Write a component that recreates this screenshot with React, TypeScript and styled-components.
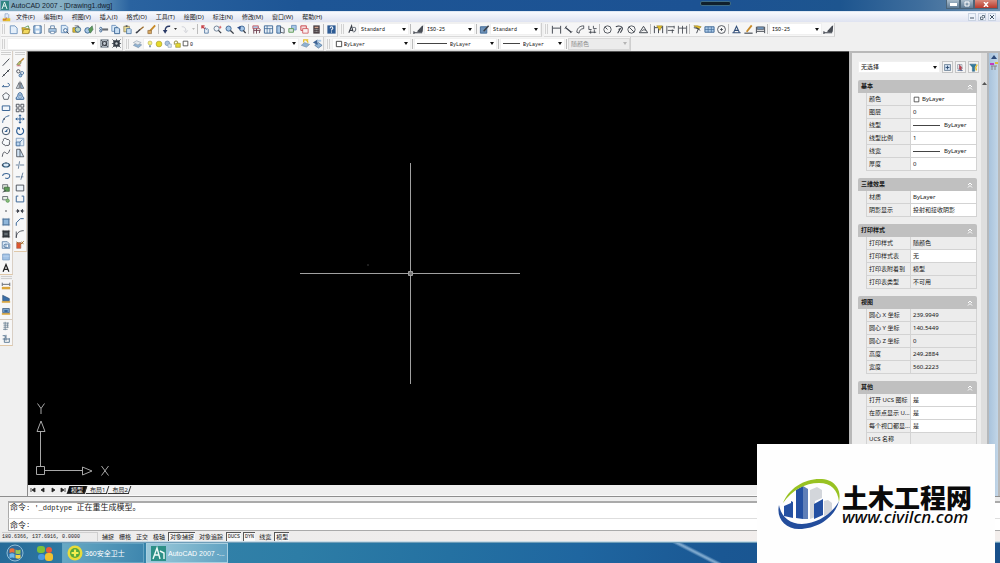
import React from "react";
import styled, { createGlobalStyle, css } from "styled-components";

const sans = `"Noto Sans", "Noto Sans CJK SC", sans-serif`;
const mono = `"Liberation Mono", "Noto Sans CJK SC", monospace`;

const GlobalStyle = createGlobalStyle`
  * { box-sizing: border-box; }
  body { margin: 0; background: #f0f0f0; font-family: ${sans}; font-size: 6px; color: #161616; }
  button, select, input, textarea { font: inherit; color: inherit; margin: 0; padding: 0; border: 0; background: none; border-radius: 0; }
  a { color: inherit; text-decoration: none; }
`;

/* ---------- glyphs ---------- */

const K = "#3a3f48";
const B = "#3d6796";
const L = "#a9c8e6";
const Y = "#e6c02a";
const R = "#c8434a";
const G = "#5d9a58";

const glyphs: Record<string, React.ReactNode> = {
  new: <path d="M2.500 2h5l2.500 2.500v6h-7.500z" fill="#e4effa" stroke="#6e93bd" />,
  open: <><path d="M2 4h3l1 1h4v5H3z" fill={Y} stroke="#8a7426" strokeWidth=".7" /><path d="M5 4l4-2 1 3" fill="none" stroke={G} /><path d="M4 6h7l-2 4.500H2.500z" fill="#f2d960" stroke="#8a7426" strokeWidth=".7" /></>,
  save: <><path d="M2 2h8v8H2z" fill={L} stroke={B} /><path d="M4 2h4v3H4zM4 7h4v3H4z" fill="#f4f8fc" /></>,
  print: <><path d="M4 5V2h4v3" fill="#fff" stroke={B} strokeWidth=".8" /><path d="M2 5h8v4H2z" fill={L} stroke="#5a6f87" strokeWidth=".8" /><path d="M4 8h4v2.500H4z" fill="#fff" stroke={B} strokeWidth=".6" /></>,
  preview: <><path d="M2.500 1.500h5l2 2v6h-7z" fill="#dcebf8" stroke="#6e93bd" /><circle cx="7" cy="7" r="2" fill="#f6fafd" stroke={B} /><path d="M8.500 8.500l2 2" stroke={K} /></>,
  publish: <><path d="M2 4h6v5H2z" fill={Y} stroke="#7a7030" strokeWidth=".7" /><circle cx="7.500" cy="6" r="3" fill="#b8d4c0" stroke={B} /><path d="M4 2h4v2" stroke={K} strokeWidth=".7" fill="none" /></>,
  web: <><circle cx="5" cy="7" r="3" fill={L} stroke={B} /><path d="M6 6l4-4 1 4-3 4z" fill={G} stroke="#416a55" strokeWidth=".6" /></>,
  cut: <><path d="M4.500 5.500h6.500M4.500 6.500h6.500" stroke={K} /><circle cx="3" cy="4.800" r="1.200" fill="none" stroke={B} /><circle cx="3" cy="7.500" r="1.200" fill="none" stroke={B} /></>,
  copyclip: <><path d="M2 1.500h4l1.500 1.500v5H2z" fill="#dcebf8" stroke="#6e93bd" /><path d="M5 4h4l1.500 1.500v5H5z" fill="#c8def2" stroke={B} /></>,
  paste: <><path d="M2 2.500h6v6H2z" fill="#e9dc9a" stroke="#8a7e50" strokeWidth=".8" /><path d="M4 1.500h2v1.500H4z" fill={K} /><path d="M5 5h4l1 1v4.500H5z" fill="#c8def2" stroke={B} strokeWidth=".8" /></>,
  match: <><path d="M10.500 3L6 6.500" stroke="#9a6a2c" strokeWidth="1.400" /><path d="M6.500 6L3 9.500 2 9" stroke={K} strokeWidth="1.600" fill="none" /></>,
  blockedit: <><path d="M10 1.500L5 7l-2 3" stroke="#c88a28" strokeWidth="2" fill="none" /><path d="M2 7h4v3.500H2z" fill="#d8a860" stroke="#7c5a30" strokeWidth=".6" /></>,
  undo: <><path d="M10 2.500C6 2 4.500 4 4.500 8" stroke="#2a3a66" strokeWidth="1.500" /><path d="M2 6.500h5L4.500 10.500z" fill="#2a3a66" /></>,
  redo: <path d="M3 3c3 0 4.500 1 4.500 5M5.500 7l2 2.500 2-2.500" stroke="#c9ccd2" fill="none" />,
  pan: <><path d="M2 2l4 4M2 5V2h3" stroke={R} strokeWidth="1.200" fill="none" /><path d="M5 10V6l1-2 1 2 1-1 1 1v4z" fill="#e8eef6" stroke={B} strokeWidth=".8" /></>,
  zoomrt: <><circle cx="5" cy="5" r="2.800" fill="#eef4fa" stroke="#6a7c92" /><path d="M7 7l3 3" stroke={K} strokeWidth="1.400" /><path d="M9 2v3M7.700 3.500h2.600" stroke={R} strokeWidth=".8" /></>,
  zoomwin: <><circle cx="5" cy="5" r="2.800" fill={L} stroke={B} /><path d="M7 7l3.500 3.500" stroke={K} strokeWidth="1.500" /></>,
  zoomprev: <><circle cx="6.500" cy="5" r="2.800" fill={L} stroke={B} /><path d="M8 7l2.500 3" stroke={K} strokeWidth="1.500" /><path d="M1 4l4-2v4z" fill="#2a4a86" /></>,
  properties: <><path d="M2 2h6v3H2z" fill={L} stroke={R} strokeWidth=".8" /><path d="M3 5v5.500M6 5v5.500M3 7h7M8 4l2 2-1 4" stroke="#6e3f4f" fill="none" /></>,
  designcenter: <><path d="M1.500 2h9v8h-9z" fill="#e8f0f8" stroke={B} /><path d="M1.500 5h9M4.500 2v8M7.500 5v5" stroke={B} strokeWidth=".8" /></>,
  palettes: <><path d="M2 2h4v8H2z" fill={L} stroke={B} /><path d="M6 3l4 2v5l-4-1z" fill="#e8f0f8" stroke={K} strokeWidth=".8" /></>,
  sheetset: <><path d="M5 1.500h5v5H5z" fill={L} stroke="#6e93bd" /><path d="M2 5h5v4H2z" fill="#d8e4da" stroke={G} /></>,
  markup: <><path d="M2 2h6v5H2z" fill="#f5dcdc" stroke={R} /><path d="M4 5h6v5H4z" fill="#f9f0f0" stroke={R} strokeWidth=".8" /></>,
  calc: <><path d="M2.500 1.500h7v9h-7z" fill="#4b4044" /><path d="M4 3h4v1.500H4z" fill="#d0a08a" /><path d="M4 6h4M4 8h4" stroke="#aaa" strokeDasharray="1 .5" /></>,
  help: <><path d="M1.500 1.500h9v9h-9z" fill="#2d5b94" /><path d="M4.500 4.500c0-2 3-2 3 0 0 1.200-1.500 1-1.500 2.500M6 8.200v1.200" stroke="#fff" fill="none" strokeWidth="1.100" /></>,
  textstyle: <><path d="M2 9.500L5 2l1.500 6M3 7h3" stroke={K} strokeWidth="1.200" fill="none" /><path d="M6 4c4-2 5 3 1 5" stroke="#6a7078" strokeWidth="1.100" /></>,
  dimstyle: <><path d="M1 9.500h9M1 8v3" stroke={K} strokeWidth="1.200" /><path d="M10.500 2L5 8l5 .5z" fill="#4b4f55" stroke={K} /></>,
  tablestyle: <><path d="M1.500 3h7v7h-7z" fill="#6f93b8" stroke={B} /><path d="M10.500 2L5 8" stroke={K} strokeWidth="1.600" /></>,
  dlinear: <path d="M1.500 2v8.500M10.500 2v8.500M2 4.500h8" stroke={K} fill="none" />,
  daligned: <><path d="M3 4l6 5" stroke={K} strokeWidth="1.400" /><path d="M2 5l2-3M8 10l2-2" stroke={K} /></>,
  darc: <path d="M2 9C2 5 5 2 9.500 2M4.500 10c0-3 2-5 5-5M2 9l2.500 1M9.500 2v3" stroke={K} fill="none" strokeWidth=".9" />,
  dord: <path d="M2 2v4h3M7 2v3h3.500M2 9h8M4 7v3.500M8 6v4" stroke={K} fill="none" strokeWidth=".9" />,
  dradius: <><circle cx="6" cy="6" r="4" fill="none" stroke={K} strokeWidth=".9" /><path d="M6 6L3.500 3.500" stroke={K} /></>,
  djog: <path d="M2 3c4-2 8 0 7 3L7 9.500M4 10l3-5-2 1" stroke={K} fill="none" strokeWidth="1.100" />,
  ddia: <><circle cx="6" cy="6" r="4" fill="none" stroke={K} strokeWidth=".9" /><path d="M3.500 3.500l5 5" stroke={K} /></>,
  dang: <path d="M1.500 9.500h9L6 2.500zM4 8c1-2 3-2 4.500-1" stroke={K} fill="none" />,
  dquick: <><path d="M1.500 2v8M10.500 2v8M6 5v5M2 4h8" stroke={K} fill="none" /><path d="M4 2h6L7.500 7z" fill={Y} stroke="#86701c" strokeWidth=".5" /></>,
  dbase: <path d="M2 2v8.500M10 3H3M10 7H3M10 2v3M8 6v4" stroke={K} fill="none" strokeWidth=".9" />,
  dcont: <path d="M1.500 2v8.500M6 2v8.500M10.500 2v8.500M2 4.500h8" stroke={K} fill="none" strokeWidth=".9" />,
  leader: <><path d="M2 2h4l4 1-3 3z" fill={Y} stroke="#86701c" strokeWidth=".6" /><path d="M2 4l5 1-2 5M5 4l4 3" stroke={K} fill="none" /></>,
  tol: <><path d="M1 3h10v6H1z" fill={L} stroke={B} /><path d="M4.500 3v6M8 3v6M1 6h10" stroke={B} strokeWidth=".7" /></>,
  center: <><circle cx="6" cy="6" r="4.300" fill="none" stroke={K} strokeWidth=".9" /><path d="M4.500 6h3M6 4.500v3" stroke={K} /></>,
  dedit: <path d="M1.500 9.500h9M3 9L6 2.500 9 9M4 7h4" stroke="#34507a" fill="none" strokeWidth="1.200" />,
  dtedit: <><path d="M1.500 10h9" stroke={K} strokeWidth="1.200" /><path d="M9.500 1.500L4 8.500" stroke="#c88a28" strokeWidth="2" /></>,
  dupd: <><path d="M1.500 3v7M10.500 3v7M2 8h8" stroke={K} fill="none" /><path d="M2.500 3h7v3h-7z" fill="#6f93b8" stroke={K} strokeWidth=".6" /></>,
  gear: <><path d="M2 2h8v8H2z" fill="#c4ccd4" stroke="#707b87" /><circle cx="6" cy="6" r="2.200" fill="none" stroke={K} strokeWidth="1.300" /><path d="M2 2l2.500 2.500M10 2L7.500 4.500M2 10l2.500-2.500M10 10L7.500 7.500" stroke={K} strokeWidth=".8" /></>,
  geardark: <><path d="M2.500 2.500h7v7h-7z" fill="#333b44" /><path d="M1.500 1.500l9 9M10.500 1.500l-9 9M6 1v10M1 6h10" stroke="#333b44" strokeWidth=".8" /><circle cx="6" cy="6" r="1.300" fill="#c8ccd0" /></>,
  layers: <><path d="M1.500 8L5 5.500l5.500 2L7 10.500z" fill="#8fb2d2" stroke="#7590ab" strokeWidth=".7" /><path d="M1.500 5L5 3l5 2-3.500 2.500z" fill="#e4e9ee" stroke="#98a4b0" strokeWidth=".7" /></>,
  bulb: <><circle cx="6" cy="4.500" r="3" fill="#f6ef7c" stroke="#aaa13a" strokeWidth=".8" /><path d="M4.500 8h3v3h-3z" fill="#8fa0b0" /></>,
  sun: <circle cx="6" cy="6" r="4.300" fill="#e6da2a" stroke="#a79b2c" />,
  freeze: <><circle cx="5" cy="5" r="3.500" fill="#a9c2de" stroke="#6c89aa" /><path d="M6 6h5v5H6z" fill="#dde7f0" stroke="#7c97b6" strokeWidth=".8" /></>,
  lock: <><path d="M4 5h7v6H4z" fill="#e3d733" stroke="#8b8222" strokeWidth=".8" /><path d="M2 7V3c0-2 5-2 5 0v2" stroke="#8b8222" fill="none" strokeWidth="1.300" /></>,
  swatch: <path d="M2 2h8v8H2z" fill="#fff" stroke="#333" strokeWidth="1.300" />,
  layerprev: <><path d="M1.500 8L5 5l5.500 2L7 10z" fill="#8fb2d2" stroke="#7590ab" strokeWidth=".7" /><path d="M4 5V2h5M7 2l2 3" stroke={Y} strokeWidth="1.300" fill="none" /></>,
  layerstate: <><path d="M3 8l4-3 4 3-4 3z" fill="#8fb2d2" stroke={B} strokeWidth=".7" /><path d="M1 5l5-3.500v6z" fill="#3e6494" /><path d="M6 3h4" stroke={L} strokeWidth="2" /></>,
  line: <path d="M2 10.500L10 2" stroke={K} strokeWidth="1.100" />,
  xline: <><path d="M1.500 10.500L10.500 1.500" stroke={K} strokeWidth="1.200" /><circle cx="3.500" cy="8.500" r="1" fill={K} /><circle cx="8.500" cy="3.500" r="1" fill={K} /></>,
  pline: <path d="M1.500 8h6c3.500 0 3.500-4 .5-4M1.500 8l2-2" stroke={B} strokeWidth="1.200" fill="none" />,
  polygon: <path d="M6 2l4 3-1.500 5h-5L2 5z" stroke={K} fill="#f5f8fb" strokeWidth=".9" />,
  rect: <path d="M1.500 3.500h9v5.500h-9z" stroke={B} fill="#f1f6fb" strokeWidth="1.200" />,
  arc: <><path d="M2 10.500C2 6 5 3 10 2" stroke={B} strokeWidth="1.200" fill="none" /><circle cx="4" cy="6" r=".9" fill={K} /></>,
  circle: <><circle cx="6" cy="6" r="4.500" stroke="#44566c" strokeWidth="1.200" fill="none" /><path d="M6 6l2-2M4.500 6.500h3" stroke={B} strokeWidth="1.300" /></>,
  cloud: <path d="M3 4c-1-3 4-3 4-1 3-1 4 2 3 4 1 2-1 4-3 3-2 1-3 0-3-1-3 0-3-3-1-5z" stroke={K} fill="#f8fafc" />,
  spline: <path d="M1.500 10.500c1-7 3-6 4.500-4.500S9 7 10.500 2" stroke={K} fill="none" />,
  ellipse: <><ellipse cx="6" cy="6" rx="4" ry="2.400" stroke="#2f5a7c" strokeWidth="1.400" fill="#d9e8f5" /><path d="M1 6h1.500M9.500 6H11M6 3v1" stroke={K} strokeWidth="1.500" /></>,
  earc: <path d="M2 6c0-4 9-4 8.500 0-.5 3-3 3.500-5.500 2.500" stroke={B} strokeWidth="1.300" fill="none" />,
  insert: <><path d="M2 2h6v5H2z" fill="#dfe9df" stroke={K} strokeWidth=".8" /><path d="M4 5h6v5H4z" fill={G} stroke="#3c6138" strokeWidth=".8" /><path d="M6 9l-4 2" stroke={K} /></>,
  block: <><path d="M2 3h6v4H2z" fill="#e3efe3" stroke={K} strokeWidth=".8" /><circle cx="8" cy="8" r="2" fill="#8bbf7c" stroke={G} /></>,
  point: <circle cx="6" cy="6" r="1" fill={K} />,
  hatch: <><path d="M2.500 2.500h7v7h-7z" fill="#8fb6da" stroke={B} /><path d="M1 2.500h10M1 9.500h10M2.500 1v10M9.500 1v10" stroke="#55769a" strokeWidth=".6" /></>,
  gradient: <><path d="M2.500 2.500h7v7h-7z" fill="#3e444b" stroke="#22262b" /><path d="M1 2.500h10M1 9.500h10M2.500 1v10M9.500 1v10" stroke="#22262b" strokeWidth=".6" /><path d="M4 6h4" stroke="#9aa" /></>,
  region: <><path d="M1.500 2h6l3 3v5h-9z" fill="#dbe9f6" stroke={B} strokeWidth=".8" /><circle cx="5.500" cy="7" r="2" fill="none" stroke={B} /><path d="M6 5h3v4H6z" fill="#f4f8fc" stroke={B} strokeWidth=".7" /></>,
  table: <><path d="M2 2.500h8v7H2z" fill="#a2c3e6" stroke="#7a9cc4" /><path d="M2 5h8" stroke="#d0e2f4" strokeWidth=".6" /></>,
  mtext: <path d="M2.500 10.500L6 1.800l3.500 8.700M3.800 7.500h4.400" stroke="#222" strokeWidth="1.500" fill="none" />,
  erase: <><path d="M10.500 1.500L5.500 6.500" stroke="#b98a3a" strokeWidth="1.800" /><path d="M2 9l3.500-4 2 2L5 10z" fill="#b7bf6a" stroke="#5f5840" strokeWidth=".6" /><path d="M2 10.500h5" stroke={R} strokeWidth=".8" /></>,
  copy: <><circle cx="4" cy="4" r="2" fill="none" stroke={K} /><circle cx="8.500" cy="6" r="1.800" fill="none" stroke={B} /><circle cx="6.500" cy="9" r="1.700" fill={L} stroke={B} /></>,
  mirror: <><path d="M5 3v7H1.500z" fill="#e6edf4" stroke={K} strokeWidth=".8" /><path d="M7 3v7h3.500z" fill={L} stroke={K} strokeWidth=".8" /><path d="M6 1v10" stroke={K} strokeWidth=".6" /></>,
  offset: <><path d="M1.500 10c-1-3 2-3 2-5 0-4 5-4 5 0 0 2 3 2 2 5z" fill="#b5d0ec" stroke={B} strokeWidth="1.200" /><path d="M4.500 8.500c0-2 1-2 1-4h1c0 2 1 2 1 4z" fill="#eef5fb" stroke={B} strokeWidth=".7" /></>,
  array: <path d="M1.500 1.500H5V5H1.500zM7 1.500h3.500V5H7zM1.500 7H5v3.500H1.500zM7 7h3.500v3.500H7z" fill="#f4f6f8" stroke={K} />,
  move: <path d="M6 1v10M1 6h10M4.500 2.500L6 1l1.500 1.500M4.500 9.500L6 11l1.500-1.500M2.500 4.500L1 6l1.500 1.500M9.500 4.500L11 6 9.500 7.500" stroke="#2e5f95" strokeWidth="1.200" fill="none" />,
  rotate: <><path d="M4 2.500A4.200 4.200 0 1 0 8.500 2.600" stroke="#2e5f95" strokeWidth="1.400" fill="none" /><path d="M2 1.500h4v3.500z" fill="#2e5f95" /></>,
  scale: <><path d="M1.500 1.500h9v9h-9z" fill="#e6f0f9" stroke="#6b8db3" strokeWidth=".9" /><path d="M1.500 6h4.500v4.500H1.500zM6 6l3-3" fill="#bcd5ed" stroke={B} strokeWidth=".9" /></>,
  stretch: <path d="M2 1.500h4l4.500 9H2zM6 1.500v9" fill="#d0e2f3" stroke={K} strokeWidth=".9" />,
  trim: <path d="M1 6h3M6 6h5M5.500 1.500L4 10.500" stroke="#54708f" />,
  extend: <path d="M1 7h5M9.500 2L7 10.500M7 7h3" stroke="#54708f" />,
  breakpt: <path d="M1.500 2.500h9v7h-9z" fill="#eef4fa" stroke={K} />,
  break: <path d="M4 2.500H1.500v7h9v-7H8" fill="none" stroke={B} strokeWidth="1.200" />,
  join: <path d="M1 6h4M7 6h4M3 4l2 2-2 2zM9 4L7 6l2 2z" stroke={K} fill={K} />,
  chamfer: <path d="M1.500 10.500V7l5-5h4" stroke={B} fill="none" strokeWidth="1.200" />,
  fillet: <path d="M1.500 10.500c0-5 3-8.500 9-8.500M1.500 10.500V3" stroke={K} fill="none" />,
  explode: <><path d="M2 3h5v7H2z" fill="#e0552f" stroke="#8a5a4a" strokeWidth=".6" /><path d="M6 6l4.500-4.500M8 2l2 3M5 5l-3-3" stroke="#a8742e" strokeWidth="1.200" /></>,
  dist: <><path d="M1 7h10v3H1z" fill="#dba63a" /><path d="M1.500 2v4M10.500 2v4M2 4h8" stroke={K} strokeWidth=".9" /></>,
  area: <><path d="M1 8.500h10v2H1z" fill="#dba63a" /><path d="M2 1.500l8 4V8H2z" fill="#3a6fa8" stroke="#2d4a6c" strokeWidth=".7" /></>,
  mass: <><path d="M1 8.500h10v2H1z" fill="#dba63a" /><path d="M2 3h8v5H2z" fill="#7ba6d0" stroke="#2d4a6c" strokeWidth=".8" /><path d="M4 5h4v2H4z" fill="#2d5c90" /></>,
  list: <path d="M2.500 2.500h7M3 5h6M3 7.500h6M2.500 10H8M5 1v10M8 2v6" stroke="#6b8193" />,
  locate: <><path d="M2 2h3v3M6 1v7M2 6h8M4 5v5h6V5" stroke="#4b6b88" fill="none" /></>,
  doc: <><path d="M4 1h4l1 1v5H4z" fill="#dfeaf7" stroke="#6d87b5" strokeWidth=".7" /><path d="M1 7h10v4H1z" fill={Y} /><path d="M1 9h4l1-3" stroke={R} fill="none" /></>,
  pickadd: <><path d="M2 2h8v8H2z" fill="#c9d9ea" stroke="#61788f" /><path d="M6 3.500v5M3.500 6h5" stroke="#2c4d74" strokeWidth="1.200" /></>,
  select: <><path d="M2 2h6v6H2z" fill="none" stroke="#97a0ab" /><path d="M4.500 2l4 5H6.500l1.500 3-1.500.5L5 8 4 9z" fill={R} stroke="#6c4a6c" strokeWidth=".5" /><path d="M2 10h7" stroke="#5577a0" /></>,
  quick: <><path d="M1 1.500h8.500L7.500 5.500V11H4.500V5.500z" fill="#347d9c" stroke="#2d5d80" strokeWidth=".7" /><path d="M11 2L9 6l1 4" stroke={Y} strokeWidth="1.800" fill="none" /></>,
};

const Svg = styled.svg`
  display: block;
  flex: none;
`;

const Glyph = ({ name, size = 11 }: { name: string; size?: number }) => (
  <Svg width={size} height={size} viewBox="0 0 12 12" fill="none" aria-hidden="true">
    {glyphs[name]}
  </Svg>
);

/* ---------- shell ---------- */

const Shell = styled.div`
  position: relative;
  display: flex;
  flex-direction: column;
  height: 100vh;
  min-height: 400px;
  overflow: hidden;
`;

const TitleBar = styled.header`
  position: relative;
  display: flex;
  align-items: center;
  justify-content: space-between;
  flex: none;
  height: 12px;
  padding-left: 1px;
  border-bottom: 1px solid #dfe8f4;
  background: linear-gradient(90deg, #7fa9c0 0, #88b1c4 6%, #5f92b8 10%, #2a63a0 13%, #1d5595 30%, #1c5293 70%, #1d558f 84%, #3f6e9d 92%, #6d8fae 100%);
`;

const Title = styled.h1`
  display: flex;
  align-items: center;
  gap: 2px;
  margin: 0;
  font-family: "Liberation Sans", sans-serif;
  font-size: 7px;
  line-height: 10px;
  font-weight: 400;
  color: #14222e;
`;

const Notch = styled.div`
  position: absolute;
  top: 1px;
  left: 70%;
  width: 31px;
  height: 5px;
  border: 1px solid #3d6b84;
  border-radius: 2px;
  background: #10202c;
`;

const WindowButtons = styled.div`
  display: flex;
  align-self: flex-start;
  margin-right: 2px;
`;

const WindowButton = styled.button<{ $close?: boolean }>`
  display: grid;
  place-items: center;
  width: ${(p) => (p.$close ? 24 : 14)}px;
  height: 9px;
  border: 1px solid #4b6478;
  border-top: 0;
  background: ${(p) => (p.$close ? "linear-gradient(#d98a7c, #b83a2c)" : "linear-gradient(#a9bccb, #5f7b95)")};
`;

const MenuBar = styled.nav`
  display: flex;
  align-items: center;
  gap: 1px;
  flex: none;
  height: 10px;
  padding: 0 4px 0 2px;
  background: linear-gradient(#f8f9fd, #dfe3f1);
`;

const MenuItem = styled.button`
  padding: 0 4px;
  line-height: 9px;
  white-space: nowrap;
  &:hover { background: #cfdcf2; }
`;

const MdiButtons = styled.div`
  display: flex;
  gap: 2px;
  margin-left: auto;
`;

const MdiButton = styled.button`
  display: grid;
  place-items: center;
  width: 8px;
  height: 8px;
  border: 1px solid #c9d3e2;
  background: #eef3fb;
`;

/* ---------- toolbars ---------- */

const ToolRow = styled.div<{ $h: number }>`
  display: flex;
  align-items: center;
  flex: none;
  height: ${(p) => p.$h}px;
  padding-left: 1px;
  background: #f0f0f0;
`;

const Toolbar = styled.div`
  display: flex;
  align-items: center;
  height: 14px;
  margin-right: 2px;
  border-right: 1px solid #cfcfcf;
  border-bottom: 1px solid #dadada;
  background: #f6f6f6;
`;

const Handle = styled.span`
  width: 3px;
  height: 10px;
  margin: 0 2px 0 1px;
  border: solid #d2d2d2;
  border-width: 0 1px;
`;

const Separator = styled.span`
  width: 1px;
  height: 10px;
  margin: 0 1px;
  background: #bcbcbc;
`;

const ToolButton = styled.button`
  display: grid;
  place-items: center;
  width: 12px;
  height: 12px;
  &:hover { background: #dbe7f5; }
`;

const DropButton = styled.button`
  display: grid;
  place-items: center;
  width: 6px;
  height: 12px;
`;

const Arrow = ({ muted }: { muted?: boolean }) => (
  <Svg width="4" height="3" viewBox="0 0 4 3" aria-hidden="true">
    <path d="M0 0h4L2 3z" fill={muted ? "#b4b4b4" : "#111"} />
  </Svg>
);

const ComboBox = styled.label<{ $w: number; $off?: boolean }>`
  display: flex;
  align-items: center;
  gap: 1px;
  width: ${(p) => p.$w}px;
  height: 12px;
  padding: 0 2px;
  border: 1px solid ${(p) => (p.$off ? "#d8d8d8" : "#f0f0f0")};
  background: ${(p) => (p.$off ? "#ececec" : "#fff")};
  color: ${(p) => (p.$off ? "#8d8d8d" : "#111")};
`;

const ComboSelect = styled.select<{ $sans?: boolean }>`
  flex: 1;
  min-width: 0;
  height: 10px;
  padding-top: ${(p) => (p.$sans ? 0 : 2)}px;
  appearance: none;
  outline: none;
  font-family: ${(p) => (p.$sans ? sans : mono)};
  font-size: ${(p) => (p.$sans ? 6 : 5)}px;
  line-height: 8px;
  opacity: 1;
`;

type ComboProps = { label: string; value: string; w: number; off?: boolean; sansText?: boolean; children?: React.ReactNode };

const Combo = ({ label, value, w, off, sansText, children }: ComboProps) => (
  <ComboBox $w={w} $off={off}>
    {children}
    <ComboSelect aria-label={label} disabled={off} $sans={sansText}>
      <option>{value}</option>
    </ComboSelect>
    <Arrow muted={off} />
  </ComboBox>
);

const Rule = styled.span<{ $w: number }>`
  flex: none;
  width: ${(p) => p.$w}px;
  height: 1px;
  margin-right: 2px;
  background: #444;
`;

const Tools = ({ names }: { names: string[] }) => (
  <>
    {names.map((n) => (
      <ToolButton key={n} type="button" aria-label={n}>
        <Glyph name={n} />
      </ToolButton>
    ))}
  </>
);

/* ---------- workspace ---------- */

const Workspace = styled.div`
  display: flex;
  flex: 1;
  min-height: 0;
`;

const SideTools = styled.aside`
  display: flex;
  align-items: flex-start;
  flex: none;
  width: 27px;
  background: #f0f0f0;
`;

const SideColumn = styled.div`
  display: flex;
  flex-direction: column;
  width: 13px;
  margin-right: 1px;
`;

const SideBar = styled.div<{ $h: number }>`
  display: flex;
  flex-direction: column;
  height: ${(p) => p.$h}px;
  border-right: 1px solid #d9cfc4;
  border-bottom: 1px solid #e0c8a8;
  background: #f7f7f7;
`;

const SideHandle = styled.span`
  flex: none;
  height: 3px;
  margin: 1px 1px;
  border: solid #cfcfcf;
  border-width: 1px 0;
`;

const SideButton = styled.button`
  display: grid;
  place-items: center;
  flex: 1;
  min-height: 0;
  width: 12px;
`;

const SideGap = styled.span`
  flex: none;
  height: 2px;
  border-bottom: 1px solid #d6cabc;
`;

const Drawing = styled.main`
  display: flex;
  flex-direction: column;
  flex: 1;
  min-width: 0;
  border-left: 1px solid #8a8a8a;
`;

const Canvas = styled.div`
  position: relative;
  flex: 1;
  min-height: 0;
  border-top: 1px solid #555;
  background: #000;
  overflow: hidden;
`;

const Crosshair = styled.svg`
  position: absolute;
  left: 272px;
  top: 111px;
`;

const UcsIcon = styled.svg`
  position: absolute;
  left: 8px;
  bottom: 8px;
`;

const TabStrip = styled.div`
  display: flex;
  align-items: center;
  flex: none;
  height: 11px;
  border-bottom: 1px solid #fafafa;
  background: #efefef;
`;

const TabNav = styled.button`
  display: grid;
  place-items: center;
  width: 10px;
  height: 8px;
`;

const SheetTab = styled.button<{ $active?: boolean }>`
  position: relative;
  padding: 0 3px;
  margin-right: 1px;
  line-height: 8px;
  height: 9px;
  color: ${(p) => (p.$active ? "#fff" : "#222")};
  isolation: isolate;
  &::before {
    content: "";
    position: absolute;
    z-index: -1;
    inset: 0 0 1px 0;
    transform: skewX(-18deg);
    border: solid #333;
    border-width: 0 1px 1px 0;
    background: ${(p) => (p.$active ? "#111" : "#f4f4f4")};
  }
`;

/* ---------- property palette ---------- */

const Palette = styled.aside`
  display: flex;
  flex: none;
  width: 151px;
  min-height: 0;
  border: solid #b9b9b9;
  border-width: 2px 2px 0 3px;
  background: #ededed;
  overflow: hidden;
`;

const PaletteBody = styled.div`
  flex: 1;
  min-width: 0;
  padding: 8px 2px 0 6px;
  overflow: hidden;
`;

const PaletteTop = styled.div`
  display: flex;
  align-items: center;
  gap: 2px;
  margin-bottom: 7px;
`;

const PaletteButton = styled.button`
  display: grid;
  place-items: center;
  width: 11px;
  height: 12px;
  border: 1px solid #c6c6c6;
  background: #f4f4f4;
`;

const Section = styled.section`
  width: 119px;
  margin-bottom: 7px;
`;

const SectionHead = styled.h2`
  display: flex;
  align-items: center;
  justify-content: space-between;
  height: 13px;
  margin: 0;
  padding: 0 4px 0 3px;
  border-radius: 2px 2px 0 0;
  background: #c0c0c0;
  font-size: 6px;
  line-height: 13px;
  font-weight: 700;
`;

const Collapse = styled.button`
  display: grid;
  place-items: center;
  width: 6px;
  height: 8px;
`;

const PropTable = styled.table`
  width: 111px;
  margin-left: 8px;
  border-collapse: separate;
  border-spacing: 0;
  table-layout: fixed;
`;

const cell = css`
  height: 13px;
  padding: 0 2px;
  border: solid #d3d3d3;
  border-width: 0 1px 1px 0;
  line-height: 12px;
  font-weight: 400;
  text-align: left;
  white-space: nowrap;
  overflow: hidden;
`;

const PropName = styled.th`
  ${cell}
  width: 45px;
  border-left-width: 1px;
  padding-right: 0;
`;

const PropValue = styled.td<{ $edit?: boolean }>`
  ${cell}
  background: ${(p) => (p.$edit ? "#fff" : "#ececec")};
`;

const ValueLine = styled.span`
  display: flex;
  align-items: center;
  gap: 2px;
`;

const ScrollTrack = styled.div`
  display: flex;
  flex-direction: column;
  align-items: center;
  flex: none;
  width: 6px;
  padding-top: 29px;
  background: #dedede;
`;

const PaletteSpine = styled.div`
  display: flex;
  flex-direction: column;
  align-items: center;
  gap: 3px;
  flex: none;
  width: 11px;
  padding-top: 2px;
  border-left: 2px solid #b4b8bc;
  background: linear-gradient(90deg, #a9c3dc, #c2d6e8);
`;

type Prop = [string, string, boolean, ("swatch" | "line")?];

const sections: { title: string; rows: Prop[] }[] = [
  {
    title: "基本",
    rows: [
      ["颜色", "ByLayer", true, "swatch"],
      ["图层", "0", true],
      ["线型", "ByLayer", true, "line"],
      ["线型比例", "1", true],
      ["线宽", "ByLayer", true, "line"],
      ["厚度", "0", true],
    ],
  },
  { title: "三维效果", rows: [["材质", "ByLayer", true], ["阴影显示", "投射和接收阴影", true]] },
  {
    title: "打印样式",
    rows: [["打印样式", "随颜色", false], ["打印样式表", "无", true], ["打印表附着到", "模型", false], ["打印表类型", "不可用", false]],
  },
  {
    title: "视图",
    rows: [["圆心 X 坐标", "239.9949", false], ["圆心 Y 坐标", "140.5449", false], ["圆心 Z 坐标", "0", false], ["高度", "249.2884", false], ["宽度", "560.2223", false]],
  },
  {
    title: "其他",
    rows: [["打开 UCS 图标", "是", true], ["在原点显示 U...", "是", true], ["每个视口都显...", "是", true], ["UCS 名称", "", false]],
  },
];

const PropertyPalette = () => (
  <Palette aria-label="特性">
    <PaletteBody>
      <PaletteTop>
        <Combo label="选择" value="无选择" w={84} sansText />
        {["pickadd", "select", "quick"].map((n) => (
          <PaletteButton key={n} type="button" aria-label={n}>
            <Glyph name={n} size={9} />
          </PaletteButton>
        ))}
      </PaletteTop>
      {sections.map((s) => (
        <Section key={s.title}>
          <SectionHead>
            {s.title}
            <Collapse type="button" aria-label="折叠">
              <Svg width="6" height="6" viewBox="0 0 6 6" fill="none" stroke="#fff">
                <path d="M1 3l2-2 2 2M1 5.500l2-2 2 2" />
              </Svg>
            </Collapse>
          </SectionHead>
          <PropTable>
            <tbody>
              {s.rows.map(([name, value, edit, mark]) => (
                <tr key={name}>
                  <PropName scope="row">{name}</PropName>
                  <PropValue $edit={edit}>
                    <ValueLine>
                      {mark === "swatch" && <Glyph name="swatch" size={7} />}
                      {mark === "line" && <Rule $w={27} />}
                      {value}
                    </ValueLine>
                  </PropValue>
                </tr>
              ))}
            </tbody>
          </PropTable>
        </Section>
      ))}
    </PaletteBody>
    <ScrollTrack>
      <Svg width="5" height="3" viewBox="0 0 5 3"><path d="M0 3h5L2.500 0z" fill="#555" /></Svg>
    </ScrollTrack>
    <PaletteSpine>
      <Svg width="6" height="4" viewBox="0 0 6 4"><path d="M0 4l3-4 3 4z" fill="#2c4a7a" /></Svg>
      <Svg width="8" height="8" viewBox="0 0 8 8"><path d="M0 1h4v2H0z" fill="#c03cc0" /><path d="M5 0h3v2H5z" fill="#d8c040" /><path d="M1 4h6M2 4v4M5 4v4" stroke="#888" fill="none" /></Svg>
    </PaletteSpine>
  </Palette>
);

/* ---------- command line, status bar, taskbar ---------- */

const CommandPane = styled.section`
  display: flex;
  flex-direction: column;
  flex: none;
  height: 35px;
  padding: 4px 0 0 8px;
  border-top: 1px solid #8e8e8e;
  background: #ededed;
`;

const History = styled.div`
  flex: none;
  height: 18px;
  padding-left: 1px;
  border: solid #aaa;
  border-width: 2px 0 0 1px;
  border-bottom: 1px solid #dedede;
  background: #fff;
  font-size: 8px;
  line-height: 8px;
  color: #222;
`;

const Latin = styled.span`
  font-family: ${mono};
  font-size: 7px;
`;

const PromptLine = styled.label`
  display: flex;
  align-items: center;
  flex: none;
  height: 12px;
  padding-left: 1px;
  border: solid #aaa;
  border-width: 0 0 1px 1px;
  background: #fff;
  font-size: 8px;
  line-height: 10px;
  color: #222;
`;

const PromptInput = styled.input`
  flex: 1;
  min-width: 0;
  height: 9px;
  outline: none;
`;

const StatusBar = styled.footer`
  display: flex;
  align-items: center;
  gap: 2px;
  flex: none;
  height: 11px;
  padding-left: 2px;
  border-bottom: 1px solid #c9dbe6;
  background: linear-gradient(90deg, #ececec, #f3eeec);
`;

const Coords = styled.output`
  width: 96px;
  height: 9px;
  border: solid #cfcfcf;
  border-width: 1px 1px 0 0;
  font-family: ${mono};
  font-size: 5px;
  line-height: 9px;
`;

const StatusToggle = styled.button<{ $on?: boolean; $latin?: boolean }>`
  height: 9px;
  padding: 0 1px;
  border: solid ${(p) => (p.$on ? "#555" : "transparent")};
  border-width: 1px 0 0 1px;
  background: ${(p) => (p.$on ? "#f8f8f8" : "transparent")};
  font-family: ${(p) => (p.$latin ? mono : sans)};
  font-size: ${(p) => (p.$latin ? 5 : 6)}px;
  line-height: 8px;
  white-space: nowrap;
`;

const Taskbar = styled.nav`
  display: flex;
  align-items: stretch;
  flex: none;
  height: 21px;
  border-top: 1px solid #6f9db8;
  background:
    linear-gradient(27deg, transparent 44%, #7ba6cc 49%, #7ba6cc 51%, transparent 56%) 71% 0 / 60px 100% no-repeat,
    linear-gradient(100deg, #256a98 0, #3684aa 12%, #2d7da6 30%, #2471a2 45%, #1f66a0 58%, #1a5793 72%, #184f8a 100%);
`;

const Orb = styled.button`
  display: grid;
  place-items: center;
  width: 30px;
`;

const Task = styled.button<{ $active?: boolean }>`
  display: flex;
  align-items: center;
  gap: 2px;
  width: 82px;
  margin-left: 2px;
  padding-left: 4px;
  border: 1px solid ${(p) => (p.$active ? "#a8cfe0" : "#64a3c2")};
  background: ${(p) => (p.$active ? "linear-gradient(100deg, #9cc9da, #78b2cb 60%, #5fa1c2)" : "linear-gradient(100deg, #67a9c4, #3e86ae)")};
  color: #fff;
  font-family: "Liberation Sans", "Noto Sans CJK SC", sans-serif;
  font-size: 7px;
  line-height: 9px;
  white-space: nowrap;
`;

/* ---------- sponsor card ---------- */

const SponsorCard = styled.a`
  position: absolute;
  right: 5px;
  bottom: 0;
  display: flex;
  align-items: center;
  width: 238px;
  height: 119px;
  padding: 2px 0 0 21px;
  background: #fefefe;
  color: #0a0a0a;
`;

const SponsorText = styled.span`
  display: flex;
  flex-direction: column;
  padding-top: 2px;
  white-space: nowrap;
`;

const SponsorName = styled.strong`
  font-family: "Noto Sans CJK SC", sans-serif;
  font-size: 26px;
  font-weight: 900;
  line-height: 22px;
`;

const SponsorSite = styled.span`
  font-family: "Noto Sans", sans-serif;
  font-size: 17px;
  font-weight: 500;
  font-style: italic;
  line-height: 18px;
`;

const drawTools = ["line", "xline", "pline", "polygon", "rect", "arc", "circle", "cloud", "spline", "ellipse", "earc", "insert", "block", "point", "hatch", "gradient", "region", "table", "mtext"];
const modifyTools = ["erase", "copy", "mirror", "offset", "array", "move", "rotate", "scale", "stretch", "trim", "extend", "breakpt", "break", "join", "chamfer", "fillet", "explode"];
const menus = ["文件(F)", "编辑(E)", "视图(V)", "插入(I)", "格式(O)", "工具(T)", "绘图(D)", "标注(N)", "修改(M)", "窗口(W)", "帮助(H)"];
const toggles: { text: string; on?: boolean; latin?: boolean }[] = [
  { text: "捕捉" },
  { text: "栅格" },
  { text: "正交" },
  { text: "极轴" },
  { text: "对象捕捉", on: true },
  { text: "对象追踪" },
  { text: "DUCS", on: true, latin: true },
  { text: "DYN", on: true, latin: true },
  { text: "线宽" },
  { text: "模型", on: true },
];

const SideItems = ({ names }: { names: string[] }) => (
  <>
    {names.map((n) => (
      <SideButton key={n} type="button" aria-label={n}>
        <Glyph name={n} size={10} />
      </SideButton>
    ))}
  </>
);

export default function App() {
  return (
    <Shell>
      <GlobalStyle />
      <TitleBar>
        <Title>
          <Svg width="8" height="9" viewBox="0 0 8 9"><path d="M0 0h8v9H0z" fill="#2f8582" /><path d="M1 8l2.500-7L6 8M2 5h3" stroke="#e6f5f2" fill="none" /></Svg>
          AutoCAD 2007 - [Drawing1.dwg]
        </Title>
        <Notch />
        <WindowButtons>
          <WindowButton type="button" aria-label="最小化"><Svg width="7" height="3"><path d="M0 0h7v3H0z" fill="#fff" /></Svg></WindowButton>
          <WindowButton type="button" aria-label="还原"><Svg width="6" height="6" fill="none"><path d="M1 1h4v4H1z" stroke="#fff" /></Svg></WindowButton>
          <WindowButton type="button" aria-label="关闭" $close><Svg width="6" height="5"><path d="M1 0l4 5M5 0L1 5" stroke="#fff" strokeWidth="1.500" /></Svg></WindowButton>
        </WindowButtons>
      </TitleBar>

      <MenuBar>
        <Glyph name="doc" size={9} />
        {menus.map((m) => (
          <MenuItem key={m} type="button">{m}</MenuItem>
        ))}
        <MdiButtons>
          <MdiButton type="button" aria-label="最小化窗口"><Svg width="4" height="4"><path d="M0 3h4" stroke="#456" /></Svg></MdiButton>
          <MdiButton type="button" aria-label="还原窗口"><Svg width="5" height="5" fill="none"><path d="M.5 2h2.500v2.500H.5zM2 .5h2.500V3" stroke="#456" strokeWidth=".8" /></Svg></MdiButton>
          <MdiButton type="button" aria-label="关闭窗口"><Svg width="4" height="4"><path d="M0 0l4 4M4 0L0 4" stroke="#456" /></Svg></MdiButton>
        </MdiButtons>
      </MenuBar>

      <ToolRow $h={15}>
        <Toolbar>
          <Handle />
          <Tools names={["new", "open", "save"]} />
          <Separator />
          <Tools names={["print", "preview", "publish", "web"]} />
          <Separator />
          <Tools names={["cut", "copyclip", "paste", "match", "blockedit"]} />
          <Separator />
          <Tools names={["undo"]} />
          <DropButton type="button" aria-label="放弃列表"><Svg width="3" height="2"><path d="M0 0h3L1.500 2z" fill="#333" /></Svg></DropButton>
          <Tools names={["redo"]} />
          <DropButton type="button" aria-label="重做列表"><Svg width="3" height="2"><path d="M0 0h3L1.500 2z" fill="#bbb" /></Svg></DropButton>
          <Separator />
          <Tools names={["pan", "zoomrt", "zoomwin", "zoomprev"]} />
          <Separator />
          <Tools names={["properties", "designcenter", "palettes", "sheetset", "markup", "calc"]} />
          <Separator />
          <Tools names={["help"]} />
        </Toolbar>
        <Toolbar>
          <Handle />
          <Tools names={["textstyle"]} />
          <Combo label="文字样式" value="Standard" w={51} />
          <Separator />
          <Tools names={["dimstyle"]} />
          <Combo label="标注样式" value="ISO-25" w={51} />
          <Separator />
          <Tools names={["tablestyle"]} />
          <Combo label="表格样式" value="Standard" w={51} />
        </Toolbar>
        <Toolbar>
          <Handle />
          <Tools names={["dlinear", "daligned", "darc", "dord"]} />
          <Separator />
          <Tools names={["dradius", "djog", "ddia", "dang"]} />
          <Separator />
          <Tools names={["dquick", "dbase", "dcont"]} />
          <Separator />
          <Tools names={["leader", "tol", "center"]} />
          <Separator />
          <Tools names={["dedit", "dtedit", "dupd"]} />
          <Separator />
          <Combo label="当前标注样式" value="ISO-25" w={53} />
          <Tools names={["dimstyle"]} />
        </Toolbar>
      </ToolRow>

      <ToolRow $h={14}>
        <Toolbar>
          <Handle />
          <Combo label="工作空间" value="" w={91} />
          <Tools names={["gear", "geardark"]} />
        </Toolbar>
        <Toolbar>
          <Handle />
          <Tools names={["layers"]} />
          <Combo label="图层" value="0" w={156}>
            {["bulb", "sun", "freeze", "lock"].map((n) => <Glyph key={n} name={n} size={8} />)}
            <Glyph name="swatch" size={7} />
          </Combo>
          <Tools names={["layerprev", "layerstate"]} />
        </Toolbar>
        <Toolbar>
          <Handle />
          <Combo label="颜色控制" value="ByLayer" w={79}><Glyph name="swatch" size={8} /></Combo>
          <Separator />
          <Combo label="线型控制" value="ByLayer" w={83}><Rule $w={30} /></Combo>
          <Separator />
          <Combo label="线宽控制" value="ByLayer" w={65}><Rule $w={17} /></Combo>
          <Separator />
          <Combo label="打印样式控制" value="随颜色" w={62} off sansText />
        </Toolbar>
      </ToolRow>

      <Workspace>
        <SideTools>
          <SideColumn>
            <SideBar $h={224}><SideHandle /><SideItems names={drawTools} /></SideBar>
            <SideHandle />
            <SideBar $h={66}>
              <SideItems names={["dist", "area", "mass"]} />
              <SideGap />
              <SideItems names={["list", "locate"]} />
            </SideBar>
          </SideColumn>
          <SideColumn>
            <SideBar $h={201}><SideHandle /><SideItems names={modifyTools} /></SideBar>
          </SideColumn>
        </SideTools>

        <Drawing>
          <Canvas>
            <Crosshair width="220" height="221" viewBox="0 0 220 221" fill="none" stroke="#a0a0a0">
              <path d="M110.500 0v108M110.500 112v109M0 110.500h108M112 110.500h108" />
              <path d="M108.500 108.500h4v4h-4z" fill="#777" />
              <path d="M67 102h2" stroke="#3a3a3a" />
            </Crosshair>
            <UcsIcon width="76" height="76" viewBox="0 0 76 76" fill="none" stroke="#a8a8a8">
              <path d="M.5 65.500h8v8h-8zM4.500 65V30M1 30.500h8L5 20zM9 69.500h38M46.500 66v8l9.500-4z" />
              <path d="M1.500 2.500l3.500 5 3.500-5M5 7.500V13M65.500 65l7 9.500M72.500 65l-7 9.500" />
            </UcsIcon>
          </Canvas>
          <TabStrip>
            {["M1 1v4M5 1L2 3l3 2z", "M4 1L1 3l3 2z", "M2 1l3 2-3 2z", "M1 1l3 2-3 2zM5 1v4"].map((d) => (
              <TabNav key={d} type="button" aria-label="切换布局">
                <Svg width="6" height="6" viewBox="0 0 6 6"><path d={d} fill="#222" stroke="#222" strokeWidth=".8" /></Svg>
              </TabNav>
            ))}
            <SheetTab type="button" $active>模型</SheetTab>
            <SheetTab type="button">布局1</SheetTab>
            <SheetTab type="button">布局2</SheetTab>
          </TabStrip>
        </Drawing>

        <PropertyPalette />
      </Workspace>

      <CommandPane>
        <History>命令<Latin>: '_ddptype </Latin>正在重生成模型。</History>
        <PromptLine>命令<Latin>: </Latin><PromptInput type="text" /></PromptLine>
      </CommandPane>

      <StatusBar>
        <Coords>180.6366, 137.6916, 0.0000</Coords>
        {toggles.map((t) => (
          <StatusToggle key={t.text} type="button" $on={t.on} $latin={t.latin} aria-pressed={!!t.on}>{t.text}</StatusToggle>
        ))}
      </StatusBar>

      <Taskbar>
        <Orb type="button" aria-label="开始">
          <Svg width="18" height="18" viewBox="0 0 18 18">
            <circle cx="9" cy="9" r="8" fill="#2d6a9c" stroke="#8fbfd8" />
            <path d="M3.500 5c2-1.200 3.500-1 5 0v4c-1.500-1-3-1-5 0z" fill="#e8703a" />
            <path d="M9.500 5.500c2 1 3.500.8 5 0V9.500c-2 .8-3 .6-5 0z" fill="#9cc850" />
            <path d="M3.500 10c2-1 3.500-.8 5 0v4c-1.500-.8-3-.8-5 0z" fill="#6fb8ea" />
            <path d="M9.500 10.500c2 .8 3 .6 5 0V14c-2 1-3 .8-5 0z" fill="#f4d24a" />
          </Svg>
        </Orb>
        <Orb type="button" aria-label="启动器">
          <Svg width="18" height="17" viewBox="0 0 18 17">
            <rect x="1" y="1" width="8" height="7" rx="3" fill="#7cc03a" />
            <rect x="10" y="2" width="6" height="6" rx="3" fill="#e85a3a" />
            <rect x="2" y="9" width="7" height="6" rx="3" fill="#4a98e0" />
            <rect x="9" y="8" width="8" height="8" rx="3" fill="#f0c030" />
          </Svg>
        </Orb>
        <Task type="button">
          <Svg width="16" height="16" viewBox="0 0 16 16">
            <circle cx="8" cy="8" r="7.500" fill="#e8dc3a" /><circle cx="8" cy="8" r="5" fill="#58a83a" /><path d="M8 4.500v7M4.500 8h7" stroke="#f4ee50" strokeWidth="2.200" />
          </Svg>
          360安全卫士
        </Task>
        <Task type="button" $active>
          <Svg width="15" height="15" viewBox="0 0 15 15">
            <path d="M0 0h15v15H0z" fill="#2d8f86" /><path d="M2 13L6 2l3 11M3.500 9h4M9 5l4 2v6" stroke="#eefaf6" strokeWidth="1.400" fill="none" />
          </Svg>
          AutoCAD 2007 -...
        </Task>
      </Taskbar>

      <SponsorCard href="#">
        <Svg width="64" height="54" viewBox="0 0 64 54">
          <path d="M32 12l7-3 5 3v8l-7 3v16l-5 2z" fill="#d3d6db" />
          <path d="M46 23l4-1 4 3v9l-8 4z" fill="#d3d6db" />
          <path d="M6 28l7-3v-2l2 1v16l-9-2z" fill="#2450a2" />
          <path d="M18 12l7-4v33l-7-1z" fill="#2450a2" />
          <path d="M25 8l5 3v30l-5 0z" fill="#5f7fb8" />
          <path d="M36 26l9-5v16l-9 4z" fill="#2450a2" />
          <path d="M5 25C11 10 27 0 44 1c13 1 20 11 17 23C60 12 53 5 41 5 27 5 14 12 5 25z" fill="#98c222" />
          <path d="M1 27c-3 13 6 24 20 24 19 0 36-12 40-28-7 13-21 22-37 23C11 46 3 38 1 27z" fill="#234d9c" />
        </Svg>
        <SponsorText>
          <SponsorName>土木工程网</SponsorName>
          <SponsorSite>www.civilcn.com</SponsorSite>
        </SponsorText>
      </SponsorCard>
    </Shell>
  );
}
